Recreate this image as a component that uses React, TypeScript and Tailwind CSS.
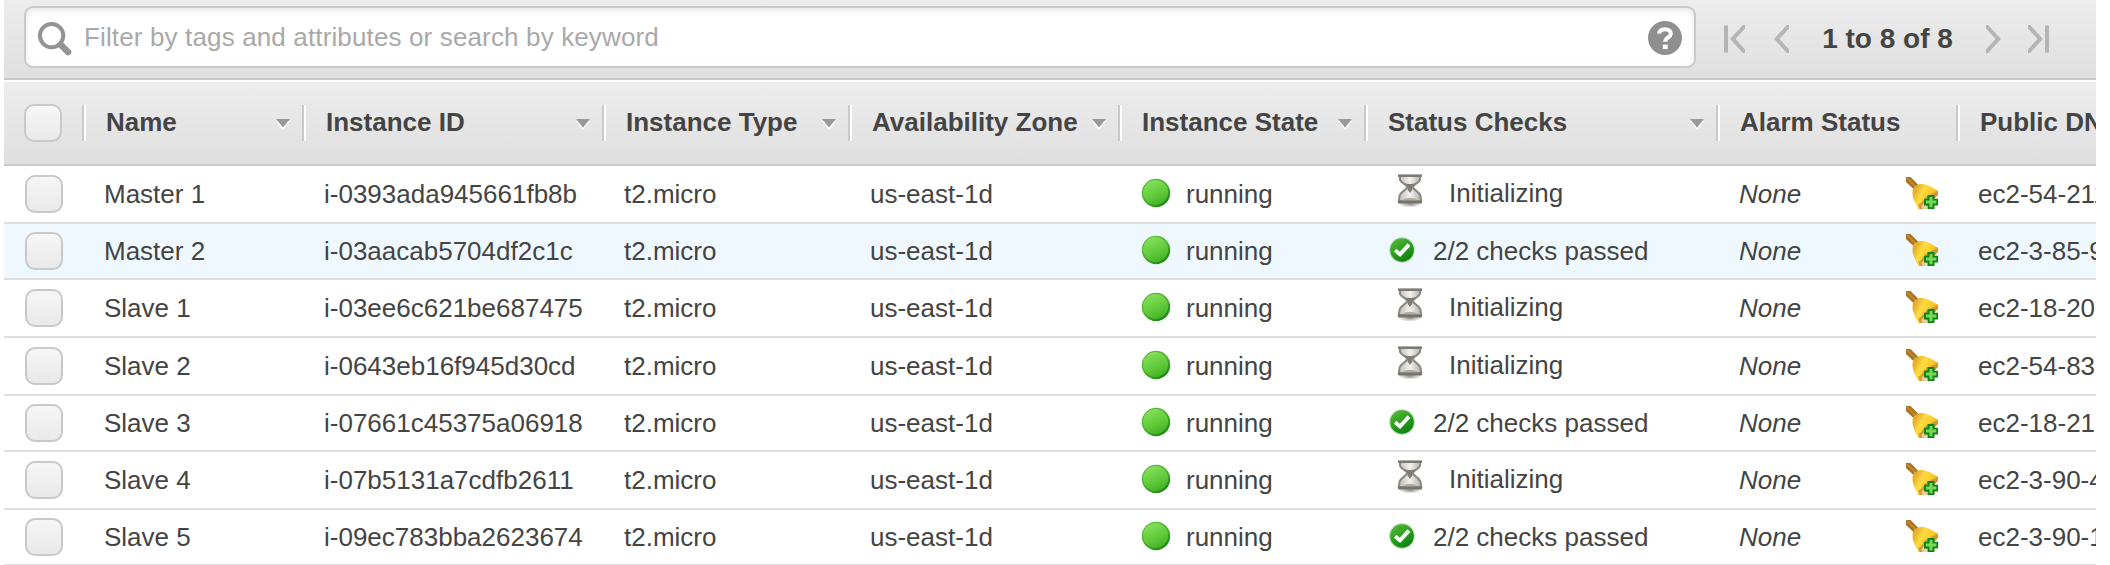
import React from "react";

type Row = {
  name: string;
  id: string;
  passed: boolean;
  dns: string;
  height: string;
  highlighted?: boolean;
};

const rows: Row[] = [
  { name: "Master 1", id: "i-0393ada945661fb8b", passed: false, dns: "ec2-54-211", height: "h-[58px]" },
  { name: "Master 2", id: "i-03aacab5704df2c1c", passed: true, dns: "ec2-3-85-9", height: "h-[56px]", highlighted: true },
  { name: "Slave 1", id: "i-03ee6c621be687475", passed: false, dns: "ec2-18-20-", height: "h-[58px]" },
  { name: "Slave 2", id: "i-0643eb16f945d30cd", passed: false, dns: "ec2-54-83-", height: "h-[58px]" },
  { name: "Slave 3", id: "i-07661c45375a06918", passed: true, dns: "ec2-18-212", height: "h-[56px]" },
  { name: "Slave 4", id: "i-07b5131a7cdfb2611", passed: false, dns: "ec2-3-90-4", height: "h-[58px]" },
  { name: "Slave 5", id: "i-09ec783bba2623674", passed: true, dns: "ec2-3-90-1", height: "h-[56px]" },
];

const columns = [
  { label: "Name", sortable: true },
  { label: "Instance ID", sortable: true },
  { label: "Instance Type", sortable: true },
  { label: "Availability Zone", sortable: true },
  { label: "Instance State", sortable: true },
  { label: "Status Checks", sortable: true },
  { label: "Alarm Status", sortable: false },
  { label: "Public DNS", sortable: false },
];

const GRID =
  "grid grid-cols-[78px_220px_300px_246px_270px_246px_352px_240px_140px]";

function Checkbox() {
  return (
    <span className="block size-[38px] shrink-0 rounded-[10px] border-2 border-[#c9c9c9] bg-linear-to-b from-[#f6f6f6] to-[#e9e9e9]" />
  );
}

function SearchIcon() {
  return (
    <svg className="mt-[3px] size-9 shrink-0" viewBox="0 0 36 36" fill="none" stroke="#949494">
      <circle cx="14.6" cy="14.6" r="11.7" strokeWidth="4" />
      <path d="M23.5 23.5 L31 31" strokeWidth="6.6" strokeLinecap="round" />
    </svg>
  );
}

function HelpIcon() {
  return (
    <svg className="mt-px size-[34px] shrink-0" viewBox="0 0 34 34" fill="none">
      <circle cx="17" cy="17" r="17" fill="#8f8f8f" />
      <path
        d="M11.2 12.6 C11.4 9.4 13.7 8.2 17 8.2 C20.4 8.2 22.8 9.9 22.8 12.8 C22.8 16.6 17.2 16.4 17.2 20.8"
        stroke="#fff"
        strokeWidth="4"
      />
      <rect x="14.8" y="23.6" width="4.9" height="4.4" fill="#fff" />
    </svg>
  );
}

function Chevron({ flip, bar }: { flip?: boolean; bar?: boolean }) {
  return (
    <svg
      className={(bar ? "w-[22px]" : "w-[16px]") + " h-7 shrink-0" + (flip ? " -scale-x-100" : "")}
      viewBox={bar ? "0 0 22 28" : "6 0 16 28"}
      fill="none"
      stroke="#b5b5b5"
      strokeWidth="4"
    >
      {bar && <path d="M3 0.5 V27.5" />}
      <path d="M23.5 -1 L9.8 14 L23.5 29" />
    </svg>
  );
}

function SortArrow() {
  return (
    <svg className="h-3 w-[14px] shrink-0" viewBox="0 0 14 12">
      <path d="M0 2 L14 2 L7 11 Z" fill="#fff" />
      <path d="M0 0 L14 0 L7 8.6 Z" fill="#999" />
    </svg>
  );
}

function RunningIcon() {
  return (
    <svg className="size-[30px] shrink-0" viewBox="0 0 30 30">
      <defs>
        <linearGradient id="ball" x1="0.3" y1="0" x2="0.75" y2="1">
          <stop offset="0" stopColor="#85e05c" />
          <stop offset="0.55" stopColor="#62cb3b" />
          <stop offset="1" stopColor="#3fae23" />
        </linearGradient>
        <linearGradient id="rim" x1="0.2" y1="0.1" x2="0.8" y2="0.95">
          <stop offset="0" stopColor="#5cbb3c" />
          <stop offset="0.5" stopColor="#4ab030" />
          <stop offset="1" stopColor="#16860f" />
        </linearGradient>
      </defs>
      <circle cx="15" cy="15" r="14.2" fill="url(#rim)" />
      <circle cx="14.6" cy="14.5" r="12.5" fill="url(#ball)" />
    </svg>
  );
}

function PassedIcon() {
  return (
    <svg className="size-[26px] shrink-0" viewBox="0 0 26 26" fill="none">
      <defs>
        <linearGradient id="pass" x1="0.2" y1="0" x2="0.8" y2="1">
          <stop offset="0" stopColor="#56b83c" />
          <stop offset="0.55" stopColor="#259a1b" />
          <stop offset="1" stopColor="#0c7d0c" />
        </linearGradient>
      </defs>
      <circle cx="13" cy="13" r="12.8" fill="#b5dcae" />
      <circle cx="13" cy="13" r="11.8" fill="url(#pass)" />
      <path d="M6.2 13.2 L11 17.4 L20 7.6" stroke="#fff" strokeWidth="3.8" />
    </svg>
  );
}

function HourglassIcon() {
  return (
    <svg className="h-[34px] w-[26px] shrink-0" viewBox="0 0 26 34">
      <defs>
        <linearGradient id="sand" x1="0" y1="0" x2="1" y2="0">
          <stop offset="0" stopColor="#bdbcb7" />
          <stop offset="0.5" stopColor="#f3f2ef" />
          <stop offset="1" stopColor="#aeada8" />
        </linearGradient>
        <radialGradient id="floor">
          <stop offset="0" stopColor="#000" stopOpacity="0.45" />
          <stop offset="1" stopColor="#000" stopOpacity="0" />
        </radialGradient>
      </defs>
      <ellipse cx="13" cy="30" rx="12" ry="3.6" fill="url(#floor)" />
      <path
        d="M3 2 V6 C4 9 10 10.5 10 13 C10 16 3 17.5 2.4 22.5 L1.8 27 H24.2 L23.6 22.5 C23 17.5 16 16 16 13 C16 10.5 22 9 23 6 V2 Z"
        fill="url(#sand)"
        stroke="#8b8982"
        strokeWidth="2"
      />
      <path d="M7 9 Q13 11 19 9 L15.5 12.5 V15.5 L13 19 L10.5 15.5 V12.5 Z" fill="#807d76" />
      <path d="M3.5 27 Q13 20.5 22.5 27 Z" fill="#aeaca5" />
      <rect x="1" y="0.4" width="24" height="2.6" fill="#7d7a73" />
      <rect x="1" y="26.4" width="24" height="3.2" rx="1" fill="#76736b" />
    </svg>
  );
}

function AlarmIcon() {
  return (
    <svg className="-mt-[2px] size-8 shrink-0" viewBox="0 0 32 32">
      <defs>
        <linearGradient id="bell" x1="0.1" y1="0.3" x2="0.9" y2="0.7">
          <stop offset="0" stopColor="#e6b02a" />
          <stop offset="0.3" stopColor="#ffdb42" />
          <stop offset="0.7" stopColor="#fbc924" />
          <stop offset="1" stopColor="#d8961a" />
        </linearGradient>
      </defs>
      <path d="M0 0 H4.5 L12 7.5 L8 12.5 L0 5 Z" fill="#ab741f" />
      <path d="M1 1 L10 10" stroke="#c08a38" strokeWidth="1.6" />
      <path
        d="M7 11.5 C9 8.2 13 6.6 17 7 C24 7.8 27.5 12 32 13.6 V17 L17 32 H12.5 C9.5 26 5 20 7 11.5 Z"
        fill="url(#bell)"
      />
      <path d="M12.5 27 C15 28 16 24 20 20 L26 16.5 L32 14.4 V18 L18 32 H13.5 Z" fill="#cf9a34" />
      <path d="M15.5 29 L19 25 L21 32 H16.5 Z" fill="#e6cfa0" />
      <path
        d="M21.5 18 H28.5 V21.7 H32 V28.5 H28.5 V32 H21.5 V28.5 H18 V21.7 H21.5 Z"
        fill="#138216"
      />
      <path d="M25 20 V30.3 M20 25.1 H30.3" stroke="#74db56" strokeWidth="3" />
    </svg>
  );
}

function Toolbar() {
  return (
    <div className="flex h-20 items-start border-b-2 border-[#c9c9c9] bg-linear-to-b from-[#ededed] to-[#dfdfdf] pt-[6px] pl-5">
      <div className="flex h-[62px] w-[1672px] shrink-0 items-center rounded-[9px] border-2 border-[#c9c9c9] bg-white pr-3 pl-[11px] shadow-[inset_0_2px_6px_rgba(0,0,0,0.1)]">
        <SearchIcon />
        <span className="ml-[11px] grow text-[26px] leading-[30px] tracking-[0.14px] whitespace-nowrap text-[#a9a9a9]">
          Filter by tags and attributes or search by keyword
        </span>
        <HelpIcon />
      </div>
      <div className="flex h-[66px] items-center pl-[27px] text-[#444]">
        <Chevron bar />
        <span className="ml-[28px] flex">
          <Chevron />
        </span>
        <span className="w-[197px] text-center text-[28px] leading-8 font-bold whitespace-nowrap">
          1 to 8 of 8
        </span>
        <Chevron flip />
        <span className="ml-[26px] flex">
          <Chevron flip bar />
        </span>
      </div>
    </div>
  );
}

function TableHeader() {
  return (
    <div
      className={
        GRID +
        " mt-[2px] h-[84px] items-start border-b-2 border-[#c9c9c9] bg-linear-to-b from-[#ededed] to-[#dfdfdf]"
      }
    >
      <div className="pt-[22px] pl-5">
        <Checkbox />
      </div>
      {columns.map((c) => (
        <div key={c.label} className="flex pt-[23px]">
          <span className="h-9 w-1 shrink-0 border-r-2 border-l-2 border-r-white border-l-[#c9c9c9]" />
          <span className="flex h-9 grow items-center justify-between pr-3 pl-5">
            <span className="pb-[2px] text-[26px] leading-[30px] font-bold whitespace-nowrap">{c.label}</span>
            {c.sortable && (
              <span className="pt-[3px]">
                <SortArrow />
              </span>
            )}
          </span>
        </div>
      ))}
    </div>
  );
}

function InstanceRow({ row }: { row: Row }) {
  const cell = "pl-[22px] whitespace-nowrap";
  return (
    <div
      className={
        GRID +
        " items-center border-b-2 border-[#dedede] text-[26px] leading-[30px] " +
        row.height +
        (row.highlighted ? " bg-[#f0f8ff]" : " bg-white")
      }
    >
      <div className="pl-[21px]">
        <Checkbox />
      </div>
      <div className={cell}>{row.name}</div>
      <div className={cell}>{row.id}</div>
      <div className={cell}>t2.micro</div>
      <div className={cell}>us-east-1d</div>
      <div className="flex items-center pl-[23px] whitespace-nowrap">
        <span className="-mt-[2px]">
          <RunningIcon />
        </span>
        <span className="pl-[15px]">running</span>
      </div>
      {row.passed ? (
        <div className="flex items-center pl-[25px] whitespace-nowrap">
          <span className="-mt-[2px]">
            <PassedIcon />
          </span>
          <span className="pl-[18px]">2/2 checks passed</span>
        </div>
      ) : (
        <div className="flex items-center pb-[2px] pl-[33px] whitespace-nowrap">
          <span className="-mt-[5px]">
            <HourglassIcon />
          </span>
          <span className="pl-[26px]">Initializing</span>
        </div>
      )}
      <div className="flex items-center justify-between pr-[18px] pl-[23px] italic">
        None
        <AlarmIcon />
      </div>
      <div className={cell}>{row.dns}</div>
    </div>
  );
}

export default function App() {
  return (
    <div className="h-[565px] overflow-hidden bg-white pl-1 font-['Liberation_Sans',Arial,sans-serif] text-[#444]">
      <div className="w-[2092px] overflow-hidden">
        <Toolbar />
        <TableHeader />
        {rows.map((row) => (
          <InstanceRow key={row.id} row={row} />
        ))}
      </div>
    </div>
  );
}
